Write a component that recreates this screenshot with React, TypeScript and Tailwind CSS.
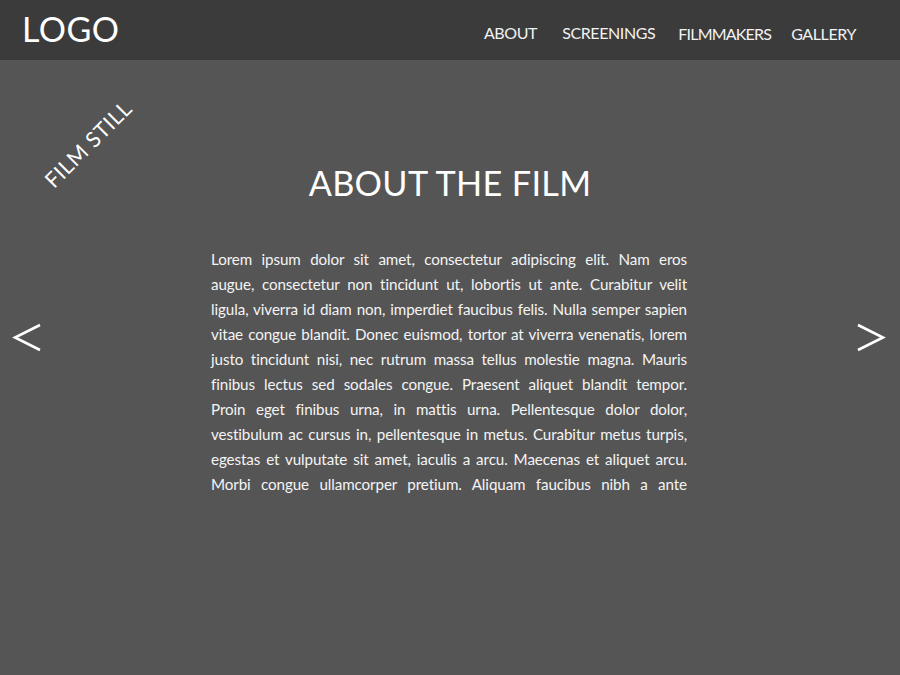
const lines = [
  "Lorem ipsum dolor sit amet, consectetur adipiscing elit. Nam eros",
  "augue, consectetur non tincidunt ut, lobortis ut ante. Curabitur velit",
  "ligula, viverra id diam non, imperdiet faucibus felis. Nulla semper sapien",
  "vitae congue blandit. Donec euismod, tortor at viverra venenatis, lorem",
  "justo tincidunt nisi, nec rutrum massa tellus molestie magna. Mauris",
  "finibus lectus sed sodales congue. Praesent aliquet blandit tempor.",
  "Proin eget finibus urna, in mattis urna. Pellentesque dolor dolor,",
  "vestibulum ac cursus in, pellentesque in metus. Curabitur metus turpis,",
  "egestas et vulputate sit amet, iaculis a arcu. Maecenas et aliquet arcu.",
  "Morbi congue ullamcorper pretium. Aliquam faucibus nibh a ante",
];

export default function App() {
  return (
    <div className="w-[900px] h-[675px] bg-[#555555] text-white flex flex-col overflow-hidden font-['Lato',sans-serif]">
      <header className="h-[60px] bg-[#3b3b3b] flex items-center shrink-0">
        <div className="pl-[22px] text-[34px] leading-none font-normal tracking-[0.5px] mt-[-3px]">LOGO</div>
        <nav className="ml-auto mr-[44px] flex items-start self-stretch pt-[24px] text-[16px] leading-[18px] tracking-[-0.4px] text-[#f2f2f2]">
          <span>ABOUT</span>
          <span className="ml-[25px]">SCREENINGS</span>
          <span className="ml-[23px] mt-[1px] tracking-[-0.8px]">FILMMAKERS</span>
          <span className="ml-[20px] mt-[1px]">GALLERY</span>
        </nav>
      </header>
      <main className="relative flex-1 flex flex-col items-center">
        <div className="absolute left-[32px] top-[68px] -rotate-45 text-[21.5px] tracking-[0.5px] origin-center">FILM STILL</div>
        <svg className="absolute left-[12px] top-[263px]" width="30" height="29" viewBox="0 0 30 29">
          <polyline points="28,2 3,14.5 28,27" fill="none" stroke="white" strokeWidth="2.6" />
        </svg>
        <svg className="absolute left-[856px] top-[263px]" width="30" height="29" viewBox="0 0 30 29">
          <polyline points="2,2 27,14.5 2,27" fill="none" stroke="white" strokeWidth="2.6" />
        </svg>
        <h1 className="mt-[106px] text-[34.3px] leading-none font-normal tracking-[0.3px]">ABOUT THE FILM</h1>
        <div className="mt-[47px] mr-[2px] w-[476px] text-[15.2px] leading-[25px] tracking-[-0.1px] text-[#f4f4f4]">
          {lines.map((l, i) => (
            <div key={i} className="text-justify [text-align-last:justify] whitespace-nowrap">
              {l}
            </div>
          ))}
        </div>
      </main>
    </div>
  );
}
